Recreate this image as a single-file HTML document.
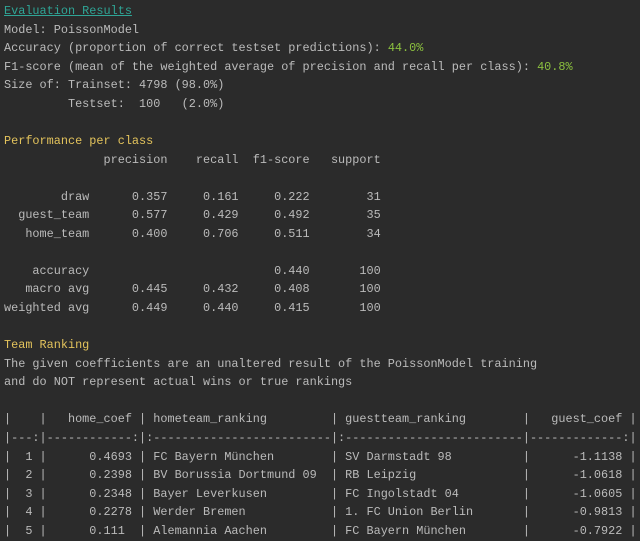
<!DOCTYPE html>
<html><head><meta charset="utf-8"><style>
html,body{margin:0;padding:0;background:#2b2b2b;width:640px;height:541px;overflow:hidden}
pre{margin:0;padding:2px 0 0 4px;font-family:"Liberation Mono",monospace;font-size:11.85px;line-height:18.57px;color:#bbbbbb;white-space:pre}
.t{color:#2fa596;text-decoration:underline}
.y{color:#e3c35c}
.g{color:#8cc13f}
</style></head><body><pre><span class="t">Evaluation Results</span>
Model: PoissonModel
Accuracy (proportion of correct testset predictions): <span class="g">44.0%</span>
F1-score (mean of the weighted average of precision and recall per class): <span class="g">40.8%</span>
Size of: Trainset: 4798 (98.0%)
         Testset:  100   (2.0%)

<span class="y">Performance per class</span>
              precision    recall  f1-score   support

        draw      0.357     0.161     0.222        31
  guest_team      0.577     0.429     0.492        35
   home_team      0.400     0.706     0.511        34

    accuracy                          0.440       100
   macro avg      0.445     0.432     0.408       100
weighted avg      0.449     0.440     0.415       100

<span class="y">Team Ranking</span>
The given coefficients are an unaltered result of the PoissonModel training
and do NOT represent actual wins or true rankings

|    |   home_coef | hometeam_ranking         | guestteam_ranking        |   guest_coef |
|---:|------------:|:-------------------------|:-------------------------|-------------:|
|  1 |      0.4693 | FC Bayern München        | SV Darmstadt 98          |      -1.1138 |
|  2 |      0.2398 | BV Borussia Dortmund 09  | RB Leipzig               |      -1.0618 |
|  3 |      0.2348 | Bayer Leverkusen         | FC Ingolstadt 04         |      -1.0605 |
|  4 |      0.2278 | Werder Bremen            | 1. FC Union Berlin       |      -0.9813 |
|  5 |      0.111  | Alemannia Aachen         | FC Bayern München        |      -0.7922 |</pre></body></html>
